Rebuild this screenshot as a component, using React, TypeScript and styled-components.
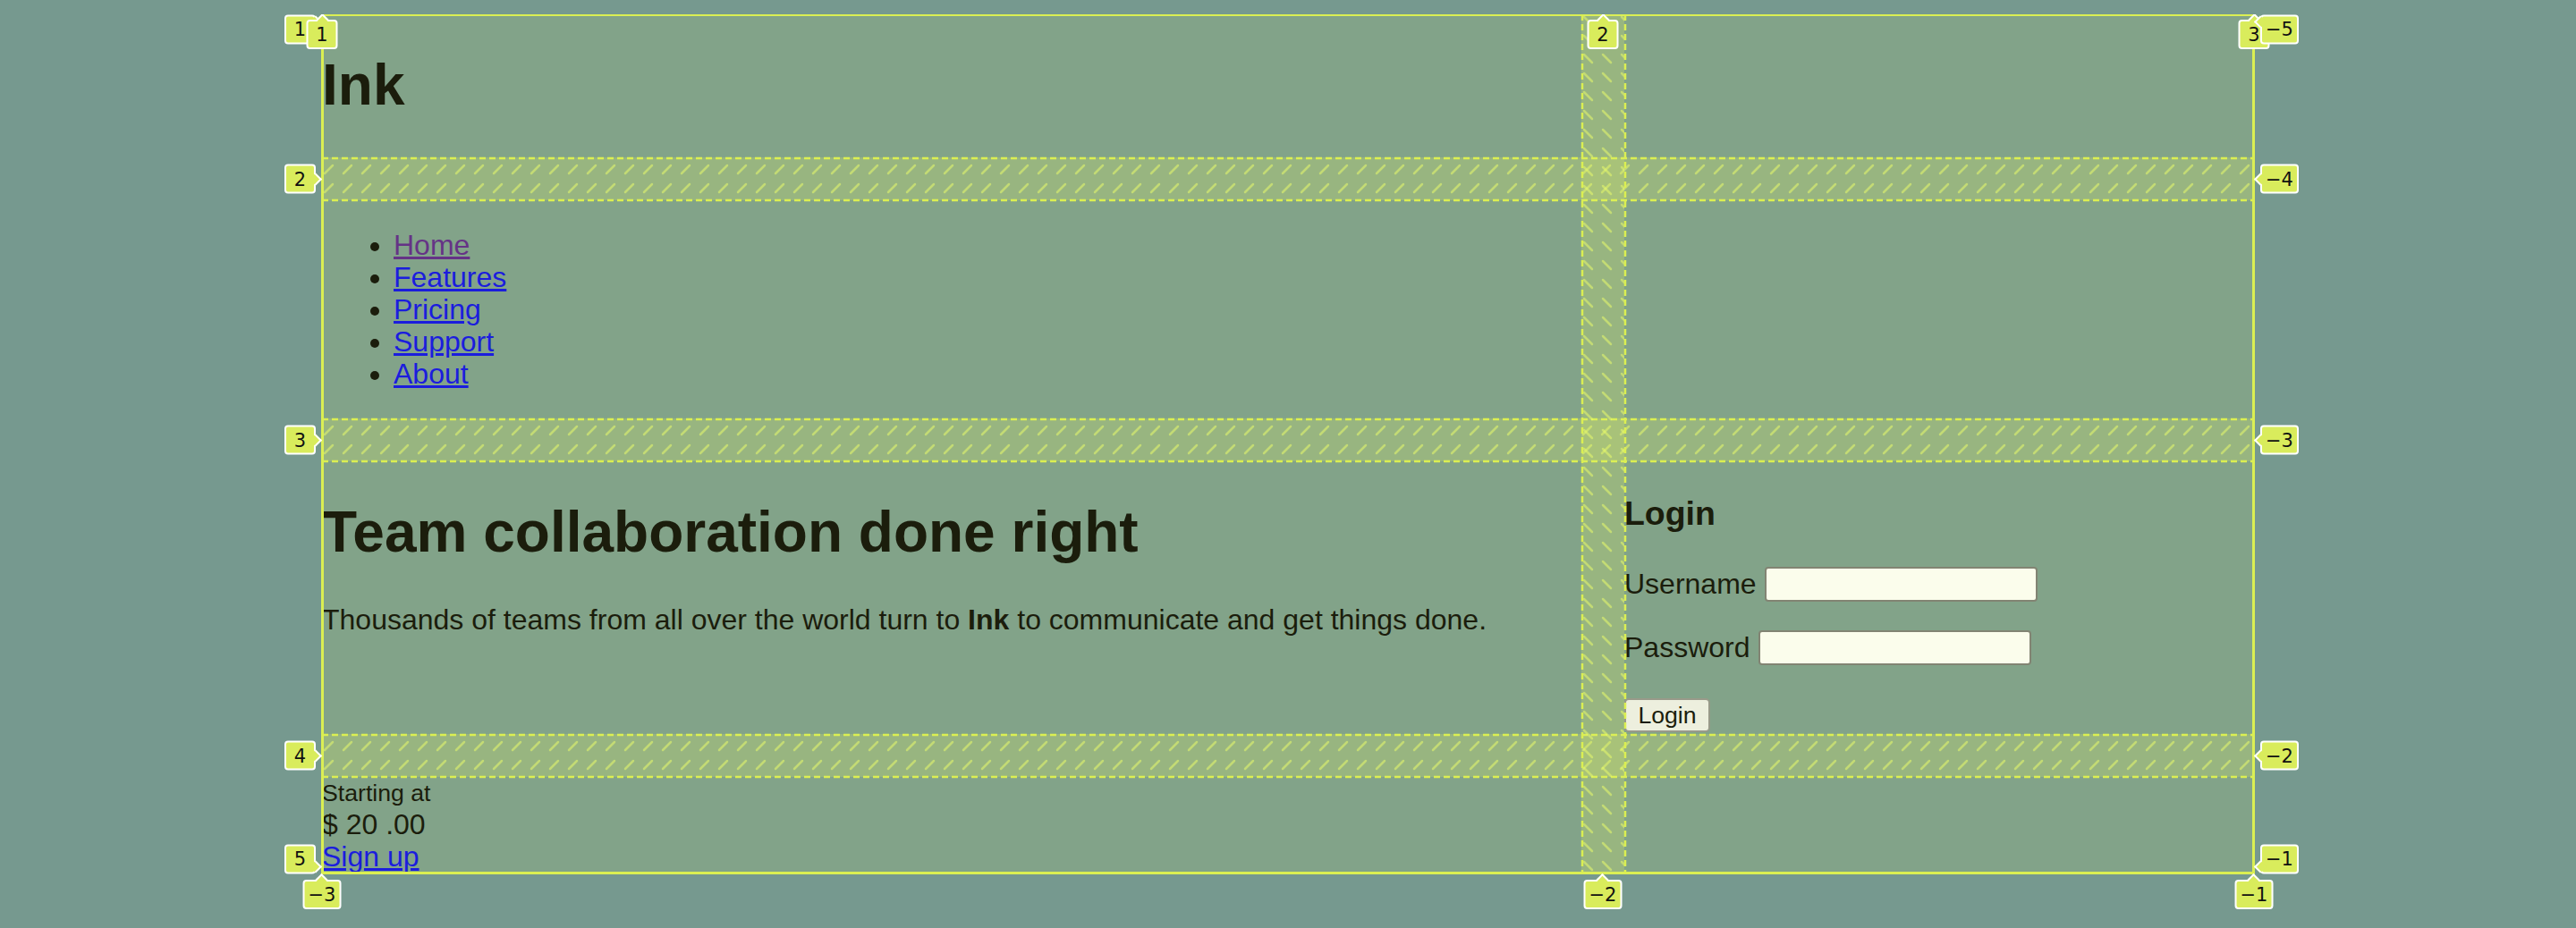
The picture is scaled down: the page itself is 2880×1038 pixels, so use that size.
import React from "react";
import styled, { createGlobalStyle, css } from "styled-components";

const GlobalStyle = createGlobalStyle`
  html { background: #76998f; }
  body {
    margin: 16px;
    min-height: calc(100vh - 32px);
    background: #76998f;
    font-family: "Liberation Sans", Arial, Helvetica, sans-serif;
    font-size: 32px;
    color: #000;
  }
`;

const LINE = "#dbef52";
const LABEL_BG = "#d9ec5c";

/* ---------- page ---------- */

const Layout = styled.div`
  position: relative;
  width: 2160px;
  margin: 0 auto;
  display: grid;
  grid-template-columns: 2fr 1fr;
  grid-template-rows: 160px 244px 305px 108px;
  gap: 48px;
`;

const Masthead = styled.header`
  grid-column: 1 / -1;
  grid-row: 1;
`;

const Heading = styled.h1`
  font-size: 64px;
  line-height: 73.6px;
  font-weight: 700;
  margin: 42.88px 0;
`;

const NavBar = styled.nav`
  grid-column: 1 / -1;
  grid-row: 2;
`;

const NavList = styled.ul`
  margin: 32px 0;
  padding-left: 80px;
  list-style: disc;
  line-height: 36px;
`;

const NavLink = styled.a<{ $visited?: boolean }>`
  color: ${(p) => (p.$visited ? "#551a8b" : "#0000ee")};
  text-decoration: underline;
`;

const Hero = styled.main`
  grid-column: 1;
  grid-row: 3;
`;

const Lead = styled.p`
  margin: 42.88px 0;
  line-height: 36.8px;
`;

const LoginPanel = styled.aside`
  grid-column: 2;
  grid-row: 3;
`;

const PanelTitle = styled.h3`
  font-size: 37.44px;
  line-height: 43px;
  font-weight: 700;
  margin: 37.44px 0;
`;

const Field = styled.div`
  display: flex;
  align-items: center;
  gap: 9px;
  height: 39px;
  margin-bottom: 32px;
`;

const FieldLabel = styled.label`
  font-size: 32px;
`;

const TextInput = styled.input`
  box-sizing: border-box;
  width: 305px;
  height: 39px;
  border: 2px solid #767676;
  border-radius: 4px;
  background: #fff;
  padding: 2px 4px;
  font: 26.67px "Liberation Sans", Arial, sans-serif;
`;

const SubmitButton = styled.button`
  box-sizing: border-box;
  display: block;
  margin-top: 37px;
  width: 96px;
  height: 38px;
  padding: 2px 12px;
  border: 2px solid #8f8f8f;
  border-radius: 5px;
  background: #efefef;
  color: #000;
  font: 26.67px "Liberation Sans", Arial, sans-serif;
`;

const PriceFooter = styled.footer`
  grid-column: 1 / -1;
  grid-row: 4;
`;

const PriceNote = styled.small`
  display: block;
  font-size: 26.67px;
  line-height: 36px;
`;

const Price = styled.div`
  line-height: 35px;
`;

const SignUpLink = styled.a`
  display: inline-block;
  line-height: 36px;
  color: #0000ee;
  text-decoration: underline;
`;

/* ---------- grid inspector overlay ---------- */

const InspectorOverlay = styled.div`
  position: absolute;
  inset: 0;
  pointer-events: none;
  display: grid;
  grid-template-columns: 2fr 48px 1fr;
  grid-template-rows: 160px 48px 244px 48px 305px 48px 108px;
  background: rgba(220, 240, 100, 0.12);
  outline: 3px solid ${LINE};
  outline-offset: -2px;
`;

const GapBand = styled.div<{ $axis: "row" | "col"; $track: number }>`
  position: relative;
  background: rgba(220, 240, 100, 0.24);
  ${(p) =>
    p.$axis === "row"
      ? css`
          grid-column: 1 / -1;
          grid-row: ${p.$track};
        `
      : css`
          grid-row: 1 / -1;
          grid-column: ${p.$track};
        `}
`;

const HatchSvg = styled.svg`
  position: absolute;
  inset: 0;
  width: 100%;
  height: 100%;
  overflow: visible;
`;

function Hatch({ id, axis }: { id: string; axis: "row" | "col" }) {
  const seg =
    axis === "row"
      ? { x1: 3, y1: 18, x2: 12, y2: 9 }
      : { x1: 3, y1: 3, x2: 12, y2: 12 };
  return (
    <HatchSvg>
      <defs>
        <pattern id={id} width="21" height="21" patternUnits="userSpaceOnUse">
          <line
            {...seg}
            stroke="rgba(230,250,105,0.55)"
            strokeWidth="2.5"
            strokeLinecap="round"
          />
        </pattern>
      </defs>
      <rect width="100%" height="100%" fill={`url(#${id})`} />
      {axis === "row" ? (
        <>
          <line x1="0" y1="1" x2="100%" y2="1" stroke={LINE} strokeWidth="2.5" strokeDasharray="7 4" />
          <line x1="0" y1="48" x2="100%" y2="48" stroke={LINE} strokeWidth="2.5" strokeDasharray="7 4" />
        </>
      ) : (
        <>
          <line x1="1" y1="0" x2="1" y2="100%" stroke={LINE} strokeWidth="2.5" strokeDasharray="7 4" />
          <line x1="49" y1="0" x2="49" y2="100%" stroke={LINE} strokeWidth="2.5" strokeDasharray="7 4" />
        </>
      )}
    </HatchSvg>
  );
}

type Side = "left" | "right" | "top" | "bottom";
type Align = "start" | "center" | "end";

const LineLabel = styled.div<{ $side: Side; $at: number; $align: Align }>`
  position: absolute;
  box-sizing: border-box;
  min-width: 35px;
  height: 33px;
  padding: 0 4px;
  display: flex;
  align-items: center;
  justify-content: center;
  background: ${LABEL_BG};
  border: 2px solid #fff;
  border-radius: 4px;
  font: 21px "DejaVu Sans", "Liberation Sans", sans-serif;
  color: #111;

  ${(p) => {
    switch (p.$side) {
      case "left":
        return css`
          right: calc(100% + 7px);
          top: ${p.$at}px;
          transform: translateY(-50%);
        `;
      case "right":
        return css`
          left: calc(100% + 7px);
          top: ${p.$at}px;
          transform: translateY(-50%);
        `;
      case "top":
        return css`
          top: 6px;
          left: ${p.$at}px;
          transform: translateX(-50%);
        `;
      default:
        return css`
          bottom: -40px;
          left: ${p.$at}px;
          transform: translateX(-50%);
        `;
    }
  }}

  &::after {
    content: "";
    position: absolute;
    width: 8px;
    height: 8px;
    background: ${LABEL_BG};
    transform: rotate(45deg);
    ${(p) => {
      const along =
        p.$align === "start" ? "1px" : p.$align === "end" ? "calc(100% - 11px)" : "calc(50% - 5px)";
      switch (p.$side) {
        case "left":
          return css`
            right: -7px;
            top: ${along};
            border-top: 2px solid #fff;
            border-right: 2px solid #fff;
          `;
        case "right":
          return css`
            left: -7px;
            top: ${along};
            border-bottom: 2px solid #fff;
            border-left: 2px solid #fff;
          `;
        default:
          return css`
            top: -7px;
            left: calc(50% - 5px);
            border-top: 2px solid #fff;
            border-left: 2px solid #fff;
          `;
      }
    }}
  }
`;

const rowLines = [
  { at: 16.5, align: "start" as Align },
  { at: 184, align: "center" as Align },
  { at: 476, align: "center" as Align },
  { at: 829, align: "center" as Align },
  { at: 944.5, align: "end" as Align },
];
const colLines = [0, 1432, 2160];

function Inspector() {
  return (
    <InspectorOverlay aria-hidden>
      {[2, 4, 6].map((t) => (
        <GapBand key={`r${t}`} $axis="row" $track={t}>
          <Hatch id={`hatch-row-${t}`} axis="row" />
        </GapBand>
      ))}
      <GapBand $axis="col" $track={2}>
        <Hatch id="hatch-col-2" axis="col" />
      </GapBand>

      {rowLines.map((r, i) => (
        <LineLabel key={`l${i}`} $side="left" $at={r.at} $align={r.align}>
          {i + 1}
        </LineLabel>
      ))}
      {colLines.map((c, i) => (
        <LineLabel key={`t${i}`} $side="top" $at={c} $align="center">
          {i + 1}
        </LineLabel>
      ))}
      {colLines.map((c, i) => (
        <LineLabel key={`b${i}`} $side="bottom" $at={c} $align="center">
          {`\u2212${colLines.length - i}`}
        </LineLabel>
      ))}
      {rowLines.map((r, i) => (
        <LineLabel key={`r${i}`} $side="right" $at={r.at} $align={r.align}>
          {`\u2212${rowLines.length - i}`}
        </LineLabel>
      ))}
    </InspectorOverlay>
  );
}

export default function App() {
  return (
    <>
      <GlobalStyle />
      <Layout>
        <Masthead>
          <Heading>Ink</Heading>
        </Masthead>
        <NavBar>
          <NavList>
            <li>
              <NavLink href="#" $visited>
                Home
              </NavLink>
            </li>
            <li>
              <NavLink href="#features">Features</NavLink>
            </li>
            <li>
              <NavLink href="#pricing">Pricing</NavLink>
            </li>
            <li>
              <NavLink href="#support">Support</NavLink>
            </li>
            <li>
              <NavLink href="#about">About</NavLink>
            </li>
          </NavList>
        </NavBar>
        <Hero>
          <Heading>Team collaboration done right</Heading>
          <Lead>
            Thousands of teams from all over the world turn to <strong>Ink</strong> to communicate and get
            things done.
          </Lead>
        </Hero>
        <LoginPanel>
          <PanelTitle>Login</PanelTitle>
          <form onSubmit={(e) => e.preventDefault()}>
            <Field>
              <FieldLabel htmlFor="username">Username</FieldLabel>
              <TextInput id="username" type="text" />
            </Field>
            <Field>
              <FieldLabel htmlFor="password">Password</FieldLabel>
              <TextInput id="password" type="password" />
            </Field>
            <SubmitButton type="submit">Login</SubmitButton>
          </form>
        </LoginPanel>
        <PriceFooter>
          <PriceNote>Starting at</PriceNote>
          <Price>
            <span>$</span> <span>20</span> <span>.00</span>
          </Price>
          <SignUpLink href="#signup">Sign up</SignUpLink>
        </PriceFooter>
        <Inspector />
      </Layout>
    </>
  );
}
